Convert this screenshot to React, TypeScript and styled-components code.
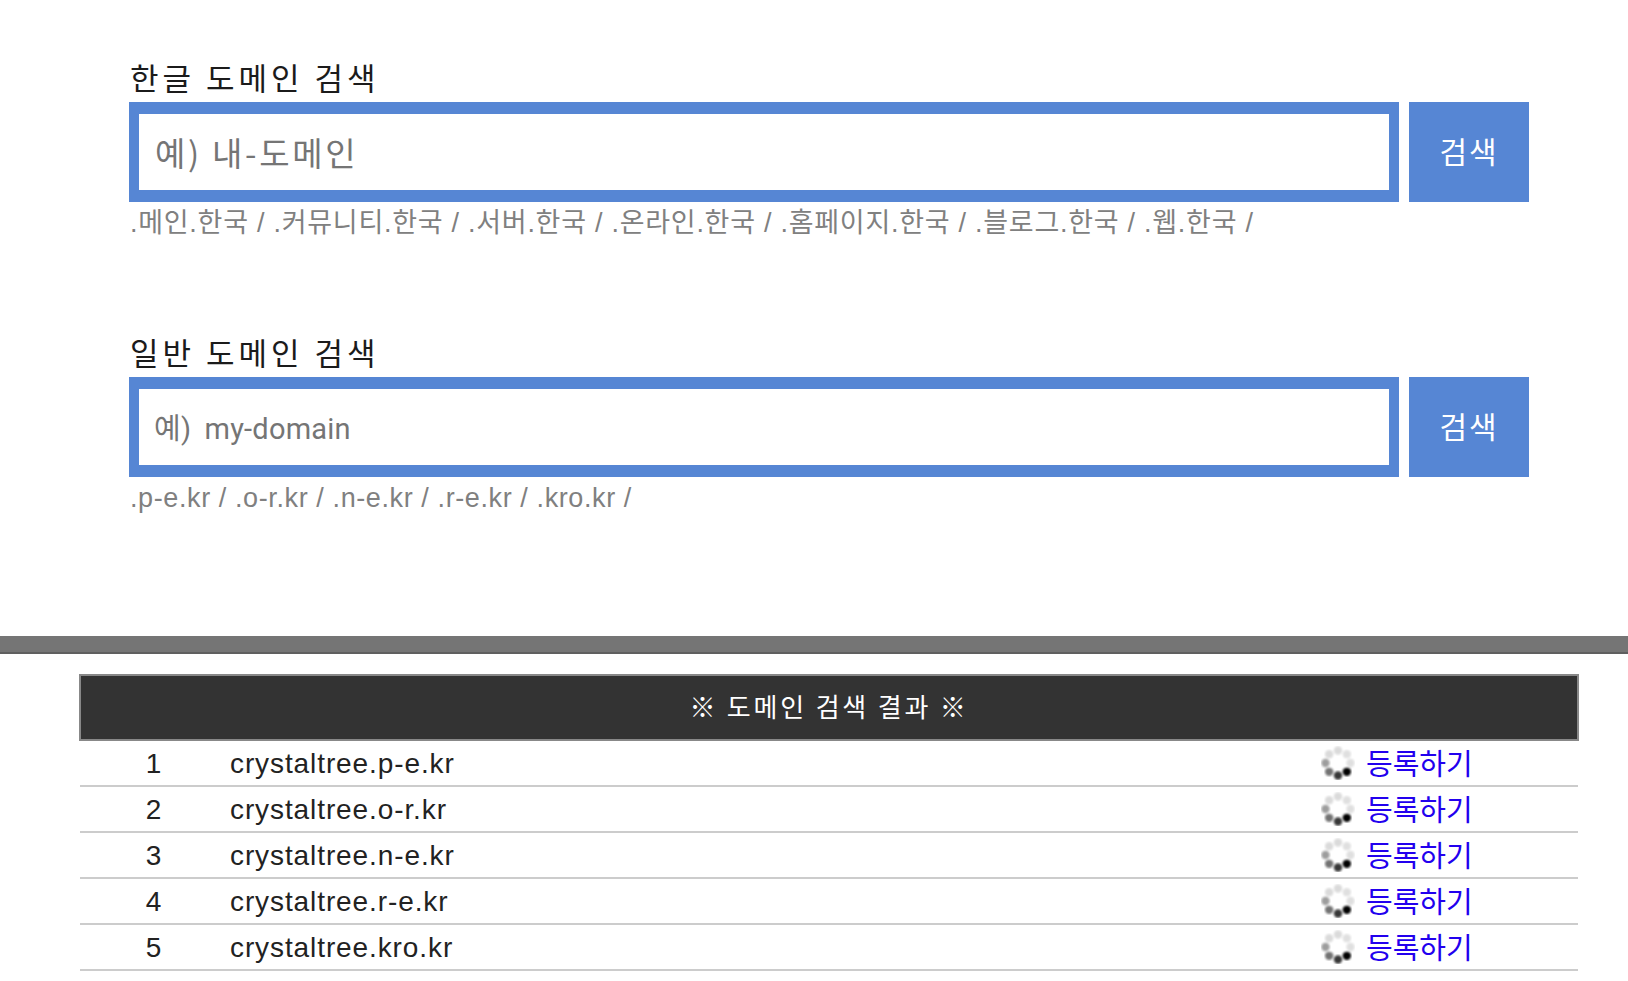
import React from "react";
import styled, { createGlobalStyle } from "styled-components";

const KO = `"Noto Sans CJK KR", "Liberation Sans", sans-serif`;
const LATIN = `"Liberation Sans", "Noto Sans CJK KR", sans-serif`;

const GlobalStyle = createGlobalStyle`
  html, body {
    margin: 0;
    padding: 0;
    background: #fff;
    overflow: hidden;
  }
  body {
    font-family: ${KO};
    color: #222;
  }
`;

const Page = styled.div`
  height: 981px;
`;

const SearchArea = styled.main`
  width: 1400px;
  margin-left: 129px;
  padding-top: 55px;
  height: 636px;
  box-sizing: border-box;
  display: flex;
  flex-direction: column;
  gap: 89px;
`;

const Section = styled.section`
  height: 186px;
`;

const Title = styled.h2`
  margin: 0;
  padding-left: 1px;
  height: 47px;
  font-size: 31px;
  line-height: 44px;
  font-weight: 400;
  letter-spacing: 4px;
  color: #1b1b1b;
  white-space: nowrap;
`;

const SearchRow = styled.form`
  display: flex;
  gap: 10px;
  height: 100px;
`;

const SearchInput = styled.input<{ $small?: boolean }>`
  flex: 1;
  min-width: 0;
  box-sizing: border-box;
  height: 100px;
  border: solid #5686d4;
  border-width: 12px 10px;
  padding: ${(p) => (p.$small ? "3px 15px 0" : "0 16px")};
  outline: none;
  font-family: ${(p) => (p.$small ? `Roboto, ${KO}` : KO)};
  font-size: ${(p) => (p.$small ? "29px" : "33px")};
  letter-spacing: ${(p) => (p.$small ? "0.2px" : "2.7px")};
  word-spacing: ${(p) => (p.$small ? "6px" : "0")};
  background: #fff;

  &::placeholder {
    color: #757575;
    opacity: 1;
  }
`;

const SearchButton = styled.button`
  width: 120px;
  height: 100px;
  border: 0;
  padding: 0 0 4px;
  background: #5686d4;
  color: #fff;
  font-family: ${KO};
  font-size: 30px;
  letter-spacing: 2px;
`;

const Suffixes = styled.p<{ $wide?: boolean }>`
  margin: 0;
  padding-left: 1px;
  font-family: ${LATIN};
  font-size: 27px;
  line-height: 42px;
  letter-spacing: ${(p) => (p.$wide ? "0.73px" : "0.6px")};
  color: #808080;
  white-space: nowrap;
`;

const Divider = styled.div`
  height: 16px;
  background: #757575;
  border-bottom: 2px solid #5f5f5f;
`;

const ResultTable = styled.table`
  width: 1500px;
  margin: 20px 0 0 79px;
  border-collapse: collapse;
  table-layout: fixed;
`;

const HeadCell = styled.th`
  height: 65px;
  padding: 0 0 5px;
  box-sizing: border-box;
  background: #333;
  border: 2px solid #888;
  color: #fff;
  font-size: 26px;
  font-weight: 400;
  letter-spacing: 2.8px;
`;

const Row = styled.tr`
  height: 46px;
  border-bottom: 2px solid #ccc;
`;

const NumCell = styled.td`
  padding: 2px 3px 0 0;
  text-align: center;
  font-family: ${LATIN};
  font-size: 28px;
  color: #222;
`;

const DomainCell = styled.td`
  padding: 2px 0 0;
  font-family: ${LATIN};
  font-size: 28px;
  letter-spacing: 0.9px;
  color: #222;
`;

const ActionCell = styled.td`
  padding: 0;
`;

const Action = styled.div`
  display: flex;
  align-items: center;
  gap: 11px;
  height: 44px;
`;

const RegisterLink = styled.a`
  color: #2200ee;
  font-size: 29px;
  line-height: 40px;
  padding-bottom: 3px;
  text-decoration: none;
`;

const DOMAINS = [
  "crystaltree.p-e.kr",
  "crystaltree.o-r.kr",
  "crystaltree.n-e.kr",
  "crystaltree.r-e.kr",
  "crystaltree.kro.kr",
];

// clockwise from the top; the black dot sits at the lower right
const SPINNER_DOTS = [0.14, 0.12, 0.12, 1, 0.78, 0.55, 0.38, 0.14];

const Spinner = () => (
  <svg width="34" height="34" viewBox="0 0 34 34" aria-hidden="true">
    <defs>
      <filter id="soft">
        <feGaussianBlur stdDeviation="0.8" />
      </filter>
    </defs>
    {SPINNER_DOTS.map((opacity, i) => {
      const angle = (i * Math.PI) / 4;
      return (
        <circle
          key={i}
          cx={17 + 12.5 * Math.sin(angle)}
          cy={17 - 12.5 * Math.cos(angle)}
          r="4.2"
          fill="#000"
          opacity={opacity}
          filter="url(#soft)"
        />
      );
    })}
  </svg>
);

const App: React.FC = () => {
  return (
    <Page>
      <GlobalStyle />
      <SearchArea>
        <Section>
          <Title>한글 도메인 검색</Title>
          <SearchRow onSubmit={(e) => e.preventDefault()}>
            <SearchInput placeholder="예) 내-도메인" />
            <SearchButton>검색</SearchButton>
          </SearchRow>
          <Suffixes $wide>.메인.한국 / .커뮤니티.한국 / .서버.한국 / .온라인.한국 / .홈페이지.한국 / .블로그.한국 / .웹.한국 /</Suffixes>
        </Section>
        <Section>
          <Title>일반 도메인 검색</Title>
          <SearchRow onSubmit={(e) => e.preventDefault()}>
            <SearchInput $small placeholder="예) my-domain" />
            <SearchButton>검색</SearchButton>
          </SearchRow>
          <Suffixes>.p-e.kr / .o-r.kr / .n-e.kr / .r-e.kr / .kro.kr /</Suffixes>
        </Section>
      </SearchArea>
      <Divider />
      <ResultTable>
        <colgroup>
          <col width="150" />
          <col />
          <col width="257" />
        </colgroup>
        <thead>
          <tr>
            <HeadCell colSpan={3}>※ 도메인 검색 결과 ※</HeadCell>
          </tr>
        </thead>
        <tbody>
          {DOMAINS.map((domain, i) => (
            <Row key={domain}>
              <NumCell>{i + 1}</NumCell>
              <DomainCell>{domain}</DomainCell>
              <ActionCell>
                <Action>
                  <Spinner />
                  <RegisterLink href="#">등록하기</RegisterLink>
                </Action>
              </ActionCell>
            </Row>
          ))}
        </tbody>
      </ResultTable>
    </Page>
  );
};

export default App;
